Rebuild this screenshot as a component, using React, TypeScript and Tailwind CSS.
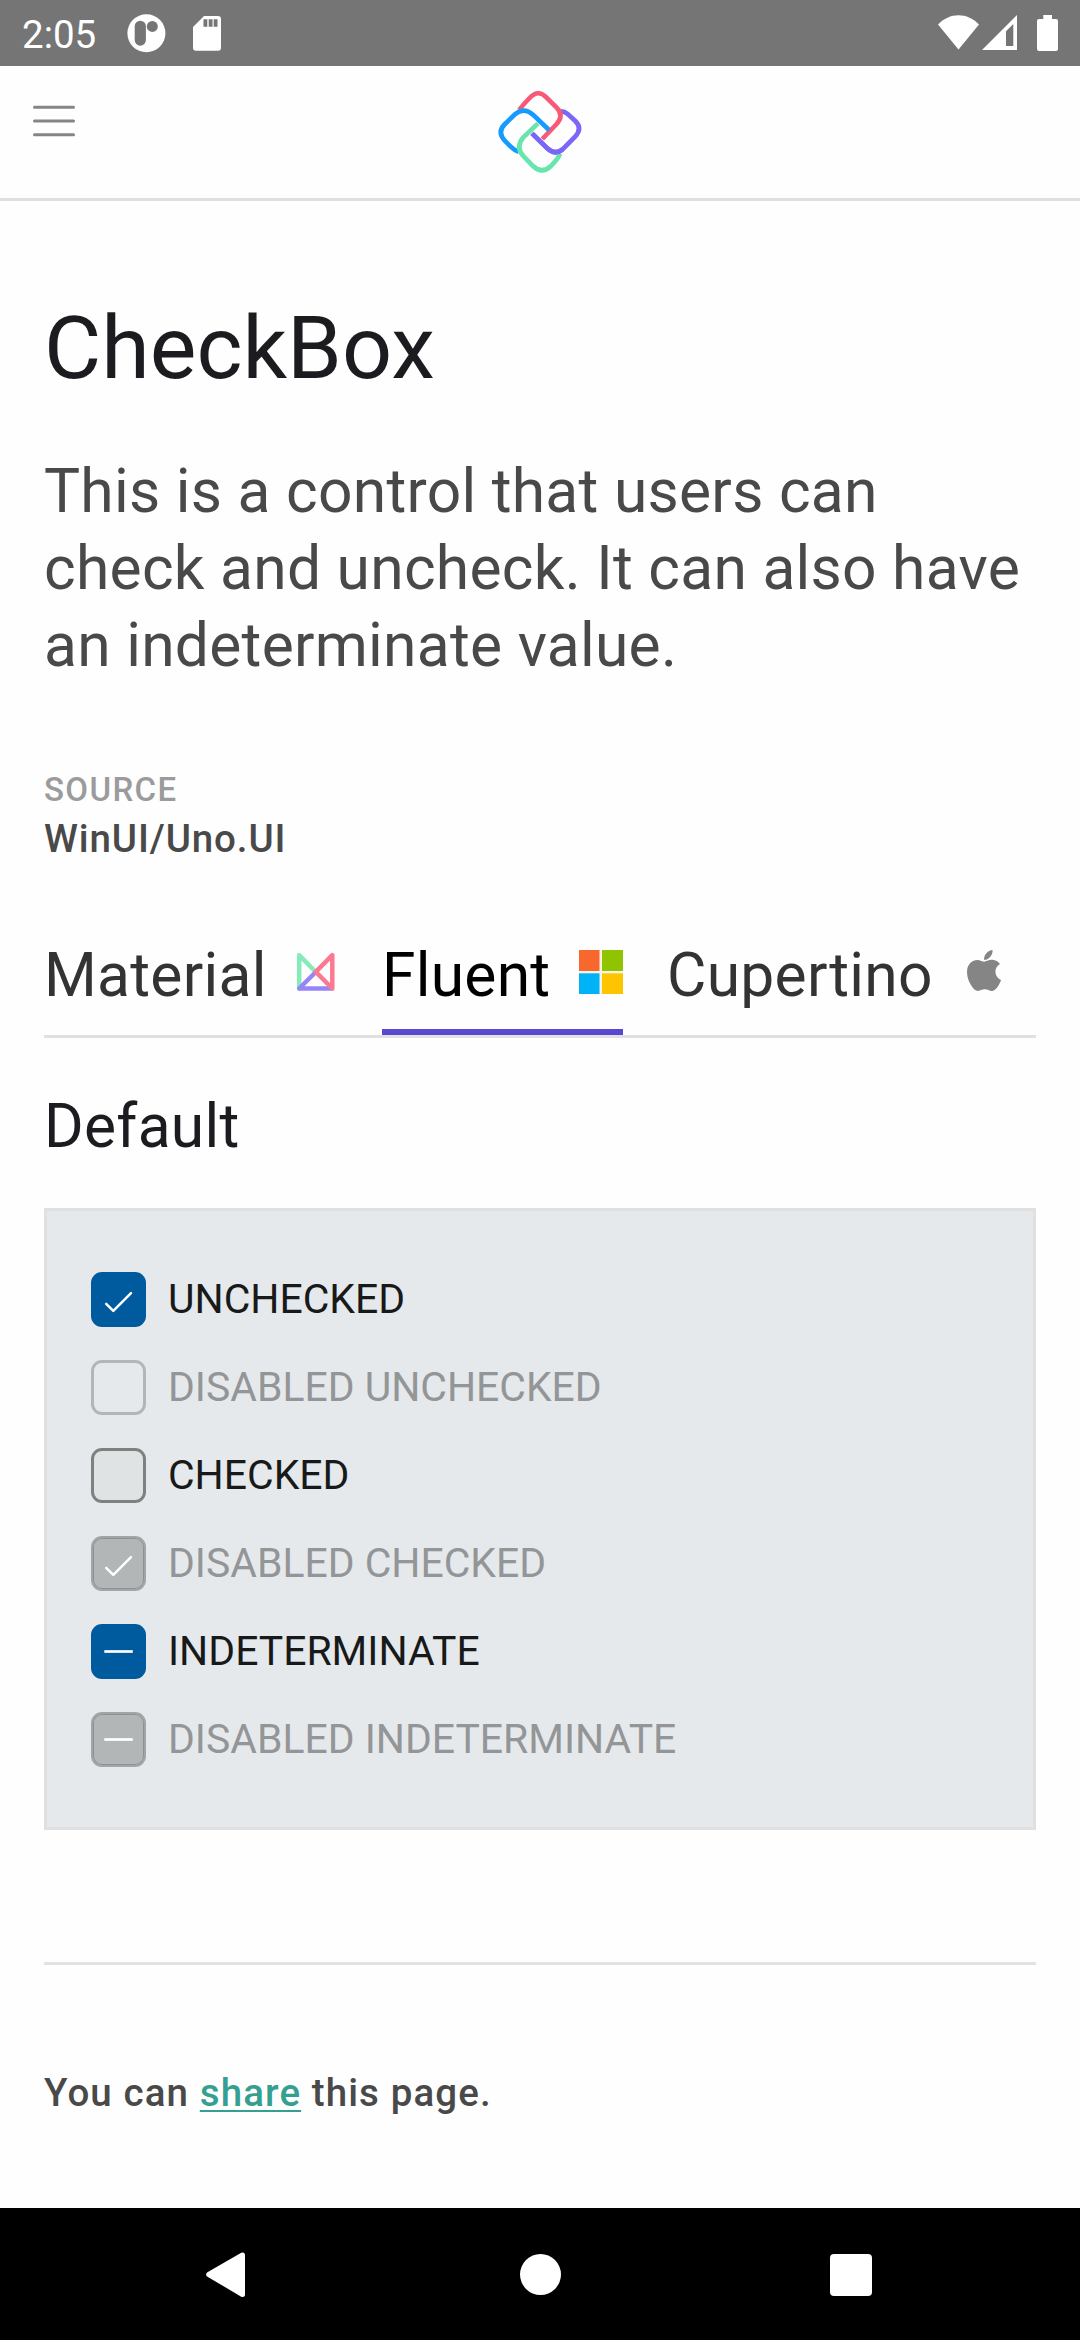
type BoxState = "checked" | "unchecked" | "indeterminate";

const options: { label: string; state: BoxState; disabled?: boolean }[] = [
  { label: "UNCHECKED", state: "checked" },
  { label: "DISABLED UNCHECKED", state: "unchecked", disabled: true },
  { label: "CHECKED", state: "unchecked" },
  { label: "DISABLED CHECKED", state: "checked", disabled: true },
  { label: "INDETERMINATE", state: "indeterminate" },
  { label: "DISABLED INDETERMINATE", state: "indeterminate", disabled: true },
];

function boxClass(state: BoxState, disabled?: boolean) {
  if (state === "unchecked") {
    return disabled ? "border-3 border-[#b2b6b7]" : "border-3 border-[#7f8181] bg-[#e0e3e4]";
  }
  return disabled
    ? "border-2 border-[#a2a5a6] bg-[#b2b6b7] shadow-[inset_0_0_0_1px_#8e9192]"
    : "border-2 border-[#005a9e] bg-[#005a9e]";
}

function CheckRow({ label, state, disabled }: { label: string; state: BoxState; disabled?: boolean }) {
  return (
    <label className="flex h-[88px] items-center gap-[22px]">
      <span className={`size-[55px] shrink-0 rounded-[11px] ${boxClass(state, disabled)}`}>
        {state !== "unchecked" && (
          <svg viewBox="2 2 51 51" className="block size-[51px]" fill="none" stroke="#fff">
            {state === "checked" ? (
              <path d="M15.2 31.8 22.3 38.9 40 21.2" strokeWidth="2.5" strokeLinecap="round" strokeLinejoin="round" />
            ) : (
              <path d="M13.3 27.5H41.8" strokeWidth="2.7" />
            )}
          </svg>
        )}
      </span>
      <span className={`text-[40.9px] leading-[48px] ${disabled ? "text-[#939597]" : "text-[#181919]"}`}>{label}</span>
    </label>
  );
}

function StatusBar() {
  return (
    <div className="flex h-[66px] justify-between bg-[#757575] text-white">
      <div className="flex">
        <span className="ml-[22px] mt-[7px] text-[38.5px] leading-[55px]">2:05</span>
        <svg className="ml-[31px] mt-[14px] size-[39px]" viewBox="0 0 39 39">
          <circle cx="19.4" cy="19.3" r="19" fill="#fff" />
          <rect x="7.7" y="6.7" width="11.2" height="25" rx="5.6" fill="#757575" />
          <circle cx="25.3" cy="12.4" r="5.5" fill="#757575" />
        </svg>
        <svg className="ml-[27px] mt-4 h-[35px] w-7" viewBox="0 0 28 35">
          <path d="M11 0H25a3 3 0 0 1 3 3V31.7a3 3 0 0 1-3 3H3a3 3 0 0 1-3-3V11Z" fill="#fff" />
          <path d="M10.5 3.3h3.8v7.4h-3.8zM15.7 3.3h3.8v7.4h-3.8zM20.7 3.3h3.8v7.4h-3.8z" fill="#757575" />
        </svg>
      </div>
      <div className="flex pr-[22px] pt-[15px]">
        <svg className="h-[35px] w-[41px]" viewBox="0 0 41 35">
          <path d="M20.5 34.5 0 9.5C5.5 3.5 13 .2 20.5 .2S35.5 3.5 41 9.5Z" fill="#fff" />
        </svg>
        <svg className="ml-[3px] h-[35px] w-[35px]" viewBox="0 0 35 35">
          <path fillRule="evenodd" d="M35 0V35H0ZM24 16.3V31H31.3V9Z" fill="#fff" />
        </svg>
        <svg className="ml-5 h-9 w-[21px]" viewBox="0 0 21 36">
          <path d="M6.3 0H15V4H19a2 2 0 0 1 2 2V34a2 2 0 0 1-2 2H2a2 2 0 0 1-2-2V6a2 2 0 0 1 2-2H6.3Z" fill="#fff" />
        </svg>
      </div>
    </div>
  );
}

function Logo() {
  return (
    <svg viewBox="108 81 264 264" className="size-[88px]" fill="none" strokeWidth="14">
      <path d="M303 154Q314 154 323 162L346 183Q368 205 346 229L316 260Q289 290 262 265L216 220" stroke="#7a67f8" />
      <path d="M178 150Q184 140 206 117Q233 85 259 112L290 143Q313 166 290 192L247 237" stroke="#f85977" />
      <path d="M267 210L219 164Q192 140 165 163L135 192Q110 216 135 243L152 260Q164 272 176 275" stroke="#159bff" />
      <path d="M234 190L190 232Q166 261 189 287L219 318Q246 344 273 318Q297 293 300 281" stroke="#67e5ad" />
      <path d="M308 268Q285 287 262 265L216 220" stroke="#7a67f8" />
    </svg>
  );
}

function Header() {
  return (
    <header className="grid h-[135px] grid-cols-[1fr_auto_1fr] items-start border-b-3 border-[#e0e0e0]">
      <svg viewBox="0 0 42 32" className="ml-[33px] mt-[39px] h-8 w-[42px]" stroke="#858585" strokeWidth="3" strokeLinecap="round">
        <path d="M1.5 2.3H40.5M1.5 16H40.5M1.5 29.7H40.5" />
      </svg>
      <div className="mt-[21px]">
        <Logo />
      </div>
      <span />
    </header>
  );
}

const MaterialIcon = () => (
  <svg viewBox="0 0 44 44" className="size-11" fill="none" strokeWidth="4.5" strokeLinejoin="round">
    <path d="M5.2 38.5V5.2L21.8 22" stroke="#85ebba" strokeLinecap="round" />
    <path d="M21.8 22 5.2 38.5H38" stroke="#9585f9" strokeLinecap="round" />
    <path d="M38.3 5.2V38.5L21.8 21.9Z" stroke="#fb7a92" />
  </svg>
);

const FluentIcon = () => (
  <svg viewBox="0 0 44 44" className="size-11">
    <path d="M0 0H44V44H0Z" fill="#f7f3e6" />
    <path d="M0 0H20.5V21H0Z" fill="#f8682c" />
    <path d="M23 0H44V21H23Z" fill="#90c300" />
    <path d="M0 23.3H20.5V44H0Z" fill="#00b3f7" />
    <path d="M23 23.3H44V44H23Z" fill="#ffc400" />
  </svg>
);

const CupertinoIcon = () => (
  <svg viewBox="4 32 376 448" preserveAspectRatio="none" className="ml-[7px] mr-[3px] h-[41px] w-[34px]" fill="#858585">
    <path d="M318.7 268.7c-.2-36.7 16.4-64.4 50-84.8-18.8-26.9-47.2-41.7-84.7-44.6-35.5-2.8-74.3 20.7-88.5 20.7-15 0-49.4-19.7-76.4-19.7C63.3 141.2 4 184.8 4 273.5q0 39.3 14.4 81.2c12.8 36.7 59 126.7 107.2 125.2 25.2-.6 43-17.9 75.8-17.9 31.8 0 48.3 17.9 76.4 17.9 48.6-.7 90.4-82.5 102.6-119.3-65.2-30.7-61.7-90-61.7-91.9zm-56.6-164.2c27.3-32.4 24.8-61.9 24-72.5-24.1 1.4-52 16.4-67.9 34.9-17.5 19.8-27.8 44.3-25.6 71.9 26.1 2 49.9-11.4 69.5-34.3z" />
  </svg>
);

const tabs = [
  { name: "Material", Icon: MaterialIcon, width: "w-[294px]" },
  { name: "Fluent", Icon: FluentIcon, width: "w-[241px]", active: true },
  { name: "Cupertino", Icon: CupertinoIcon, width: "w-[337px]" },
];

export default function App() {
  return (
    <div className="flex h-[2340px] w-[1080px] flex-col overflow-hidden bg-[#fefefe] font-[Roboto,sans-serif]">
      <StatusBar />
      <Header />
      <main className="flex-1 px-11">
        <h1 className="mt-[92px] text-[88px] leading-[110px] text-[#1c1b1f]">CheckBox</h1>
        <p className="mt-[50px] text-[60.5px] leading-[77px] tracking-[0.275px] text-[#49494a]">
          This is a control that users can
          <br />
          check and uncheck. It can also have
          <br />
          an indeterminate value.
        </p>
        <p className="mt-[84px] text-[33px] font-medium leading-[43px] tracking-[1.375px] text-[#9b9b9b]">SOURCE</p>
        <p className="text-[38.5px] font-medium leading-[55px] tracking-[0.9px] text-[#49494a]">WinUI/Uno.UI</p>

        <nav className="mt-[71px] flex gap-11 border-b-3 border-[#e0e0e0]">
          {tabs.map(({ name, Icon, width, active }) => (
            <div
              key={name}
              className={`flex h-[98px] items-start justify-between border-b-6 text-[60.5px] leading-[77px] tracking-[0.275px] ${width} ${
                active ? "border-[#5946d2] text-black" : "border-transparent text-[#333333]"
              }`}
            >
              <span>{name}</span>
              <span className="mt-[13px] flex">
                <Icon />
              </span>
            </div>
          ))}
        </nav>

        <h2 className="mt-[50px] text-[60.5px] leading-[77px] tracking-[0.275px] text-[#1c1b1f]">Default</h2>
        <section className="mt-[43px] border-3 border-[#e0e0e0] bg-[#e5e9ec] p-11">
          {options.map((o) => (
            <CheckRow key={o.label} {...o} />
          ))}
        </section>

        <p className="mt-[132px] border-t-3 border-[#e2e2e2] pt-[100px] text-[38.5px] font-medium leading-[55px] tracking-[1.1px] text-[#49494a]">
          You can{" "}
          <a href="#" className="text-[#359f91] underline decoration-2 underline-offset-4">
            share
          </a>{" "}
          this page.
        </p>
      </main>
      <footer className="flex h-[132px] items-start bg-black">
        <svg viewBox="0 0 40 46" className="ml-[206px] mt-11 h-[46px] w-10" fill="#fff" stroke="#fff" strokeWidth="5" strokeLinejoin="round">
          <path d="M36.5 3V42.5L2.7 22.5Z" />
        </svg>
        <span className="ml-[273.5px] mt-[45.5px] size-[41px] rounded-full bg-white" />
        <span className="ml-[269.5px] mt-[46px] size-[41.5px] rounded-[4px] bg-white" />
      </footer>
    </div>
  );
}
